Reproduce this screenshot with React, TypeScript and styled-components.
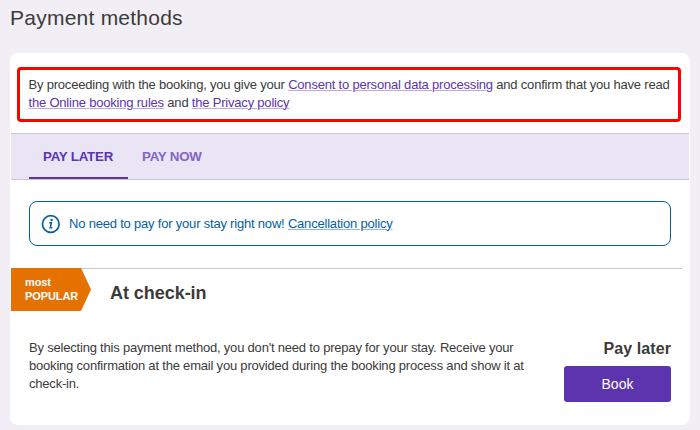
import React from 'react';
import styled, { createGlobalStyle } from 'styled-components';

const GlobalStyle = createGlobalStyle`
  * { box-sizing: border-box; }
  body {
    margin: 0;
    background: #f1eff5;
    color: #3b3b3b;
    font-family: "Liberation Sans", Arial, sans-serif;
  }
`;

const Page = styled.main`
  height: 430px;
  padding: 5px 10px;
  overflow: hidden;
`;

const Title = styled.h1`
  margin: 0 0 22px;
  font-size: 21px;
  font-weight: 400;
  line-height: 26px;
  letter-spacing: 0.24px;
`;

const Card = styled.section`
  height: 372px;
  padding: 14px 1px 0;
  border-radius: 8px;
  background: #fff;
`;

const Consent = styled.div`
  width: 664px;
  height: 55px;
  margin: 0 0 11px 6px;
  padding: 6px 0 0 8.5px;
  border: 3px solid #fe0000;
  border-radius: 4px;
`;

const TextLine = styled.p`
  margin: 0;
  font-size: 13px;
  line-height: 18px;
  white-space: nowrap;
  letter-spacing: -0.2px;
`;

const Link = styled.a<{ $tone?: 'blue' }>`
  color: ${({ $tone }) => ($tone ? '#0560a6' : '#5c35ae')};
  text-decoration: underline;
  text-decoration-color: ${({ $tone }) => ($tone ? '#8fb8d8' : '#bba9e0')};
  text-decoration-thickness: 1px;
  text-underline-offset: 1px;
`;

const Tabs = styled.nav`
  display: flex;
  height: 47px;
  padding-left: 18px;
  border-top: 1px solid #cac7d0;
  border-bottom: 1px solid #cac7d0;
  background: #e9e5f5;
`;

const Tab = styled.button<{ $active?: boolean }>`
  width: 99px;
  height: 45px;
  padding: 2px 0 0 14px;
  border: 0;
  border-bottom: 2px solid ${({ $active }) => ($active ? '#5c35ae' : 'transparent')};
  background: transparent;
  color: ${({ $active }) => ($active ? '#5c35ae' : '#8464c4')};
  font: 700 13.3px/18px "Liberation Sans", Arial, sans-serif;
  letter-spacing: -0.2px;
  text-align: left;
  white-space: nowrap;
`;

const Notice = styled.div`
  display: flex;
  align-items: center;
  gap: 8px;
  width: 642px;
  height: 45px;
  margin: 21px 0 22px 18px;
  padding-left: 11px;
  border: 1px solid #0560a0;
  border-radius: 8px;
  color: #0560a0;
`;

const Method = styled.section`
  display: flex;
  height: 43px;
  width: 671px;
`;

const Badge = styled.div`
  width: 80px;
  height: 43px;
  padding: 7px 0 0 14px;
  background: #e57200;
  clip-path: polygon(0 0, 70px 0, 100% 50%, 70px 100%, 0 100%);
  color: #fff;
  font-size: 11px;
  font-weight: 700;
  line-height: 14px;
  letter-spacing: -0.1px;
`;

const MethodHeading = styled.div`
  flex: 1;
  margin-left: -10px;
  border-top: 1px solid #cacaca;
`;

const MethodTitle = styled.h2`
  margin: 12px 0 0 29px;
  font-size: 18px;
  line-height: 24px;
  letter-spacing: -0.05px;
`;

const Details = styled.div`
  display: flex;
  justify-content: space-between;
  padding: 28px 18px 0;
`;

const Action = styled.div`
  display: flex;
  flex-direction: column;
  align-items: flex-end;
`;

const ActionTitle = styled.strong`
  font-size: 16px;
  line-height: 20px;
  letter-spacing: 0.08px;
`;

const BookButton = styled.button`
  width: 107px;
  height: 36px;
  margin-top: 7px;
  padding: 0;
  border: 0;
  border-radius: 3px;
  background: #5c35ae;
  color: #fff;
  font: 14px/20px "Liberation Sans", Arial, sans-serif;
`;

const InfoIcon = () => (
  <svg width="20" height="20" viewBox="0 0 20 20" fill="none" aria-hidden="true">
    <circle cx="9.8" cy="10" r="8.3" stroke="currentColor" strokeWidth="1.7" />
    <circle cx="10.6" cy="6" r="1.2" fill="currentColor" />
    <path d="M8.2 8.7h2.1L9.3 13.7h2" stroke="currentColor" strokeWidth="1.6" />
  </svg>
);

export default function App() {
  return (
    <>
      <GlobalStyle />
      <Page>
        <Title>Payment methods</Title>
        <Card>
          <Consent>
            <TextLine>
              By proceeding with the booking, you give your <Link>Consent to personal data processing</Link> and confirm that you have read
            </TextLine>
            <TextLine>
              <Link>the Online booking rules</Link> and <Link>the Privacy policy</Link>
            </TextLine>
          </Consent>
          <Tabs>
            <Tab $active>PAY LATER</Tab>
            <Tab>PAY NOW</Tab>
          </Tabs>
          <Notice>
            <InfoIcon />
            <TextLine>
              No need to pay for your stay right now! <Link $tone="blue">Cancellation policy</Link>
            </TextLine>
          </Notice>
          <Method>
            <Badge>most<br />POPULAR</Badge>
            <MethodHeading><MethodTitle>At check-in</MethodTitle></MethodHeading>
          </Method>
          <Details>
            <div>
              <TextLine>By selecting this payment method, you don't need to prepay for your stay. Receive your</TextLine>
              <TextLine>booking confirmation at the email you provided during the booking process and show it at</TextLine>
              <TextLine>check-in.</TextLine>
            </div>
            <Action>
              <ActionTitle>Pay later</ActionTitle>
              <BookButton>Book</BookButton>
            </Action>
          </Details>
        </Card>
      </Page>
    </>
  );
}
